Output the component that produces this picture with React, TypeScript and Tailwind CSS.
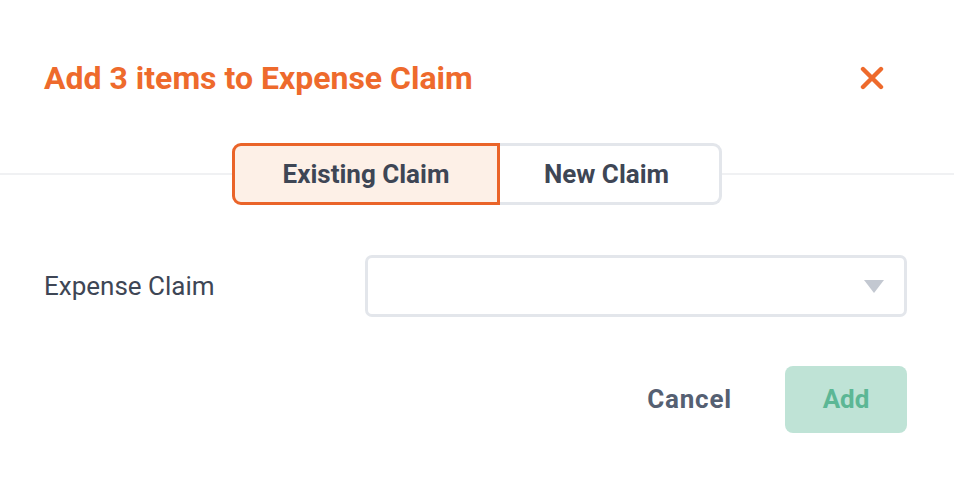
export default function App() {
  return (
    <div className="w-[954px] h-[478px] bg-white font-['Roboto',sans-serif] overflow-hidden">
      {/* Header */}
      <div className="flex items-center justify-between pl-[44px] pr-[70px] pt-[56px] h-[100px]">
        <h1 className="text-[32px] font-bold text-[#ee6a2c] leading-[44px]">
          Add 3 items to Expense Claim
        </h1>
        <button type="button" className="w-6 h-6 flex items-center justify-center text-[#ee6a2c]">
          <svg width="24" height="24" viewBox="0 0 24 24" fill="none">
            <path d="M3 3 L21 21 M21 3 L3 21" stroke="currentColor" strokeWidth="4.4" strokeLinecap="round" />
          </svg>
        </button>
      </div>

      {/* Tabs over divider */}
      <div className="flex items-center mt-[43px]">
        <div className="flex-1 h-[2px] bg-[#f0f1f3]" />
        <div className="flex h-[62px]">
          <button
            type="button"
            className="w-[268px] border-[3px] border-[#ea6429] bg-[#fdf0e7] rounded-l-[9px] text-[26px] font-bold text-[#3e4655]"
          >
            Existing Claim
          </button>
          <button
            type="button"
            className="w-[222px] border-[3px] border-l-0 border-[#e3e6eb] bg-white rounded-r-[9px] pr-[6px] text-[26px] font-bold text-[#3e4655]"
          >
            New Claim
          </button>
        </div>
        <div className="flex-1 h-[2px] bg-[#f0f1f3]" />
      </div>

      {/* Field */}
      <div className="flex items-center pl-[44px] pr-[47px] mt-[50px]">
        <label className="w-[321px] text-[26px] text-[#3e4655]">Expense Claim</label>
        <div className="flex-1 h-[62px] border-[3px] border-[#e3e6eb] rounded-[7px] flex items-center justify-end pr-[20px]">
          <svg width="20" height="13" viewBox="0 0 20 13">
            <path d="M0 0 H20 L10 13 Z" fill="#c3c8d1" />
          </svg>
        </div>
      </div>

      {/* Actions */}
      <div className="flex items-center justify-end pr-[47px] mt-[49px] gap-[53px]">
        <button type="button" className="text-[26px] font-bold text-[#556072] tracking-[0.8px]">
          Cancel
        </button>
        <button
          type="button"
          className="w-[122px] h-[67px] rounded-[8px] bg-[#bfe3d6] text-[26px] font-bold text-[#5cb795]"
        >
          Add
        </button>
      </div>
    </div>
  );
}
